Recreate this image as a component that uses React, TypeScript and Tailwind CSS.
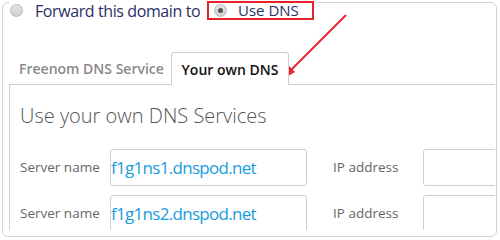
import React from "react";

function Radio({ checked }: { checked?: boolean }) {
  return (
    <span className="flex h-[13px] w-[13px] shrink-0 items-center justify-center rounded-full border border-[#b9b9b9] bg-gradient-to-b from-[#e4e4e4] to-[#cfcfcf]">
      {checked && <span className="h-[5px] w-[5px] rounded-full bg-[#555]" />}
    </span>
  );
}

function Row({ value }: { value: string }) {
  return (
    <div className="flex items-center whitespace-nowrap">
      <span className="w-[90px] shrink-0 text-[13.5px] text-[#666]">Server name</span>
      <div className="flex h-[37px] w-[197px] shrink-0 items-center rounded-[3px] border border-[#cfcfcf] text-[17px] tracking-[-0.7px] text-[#1a9be0]">
        {value}
      </div>
      <span className="ml-[26px] w-[90px] shrink-0 text-[13.5px] text-[#666]">IP address</span>
      <div className="h-[37px] w-[120px] shrink-0 rounded-[3px] border border-[#cfcfcf]" />
    </div>
  );
}

export default function App() {
  return (
    <div
      className="relative h-[240px] w-[500px] overflow-hidden bg-white"
      style={{ fontFamily: '"Open Sans", "Noto Sans", sans-serif' }}
    >
      <div className="ml-[2px] mt-[2px] h-[235px] w-[495px] rounded-[6px] border border-[#d3d1e2]">
        <div className="relative -mt-[3px] ml-[6px] flex h-[21px] w-[305px] items-center whitespace-nowrap bg-white">
          <span className="ml-[1px]"><Radio /></span>
          <span className="ml-[12px] text-[16px] tracking-[-0.4px] leading-none text-[#2b2f66]">Forward this domain to</span>
          <div className="ml-auto flex h-[19px] w-[107px] items-center border-2 border-[#e3242b] pl-[5px]">
            <Radio checked />
            <span className="ml-[11px] text-[15px] leading-none text-[#2b2f66]">Use DNS</span>
          </div>
        </div>
        <div className="ml-[6px] mt-[31px] flex h-[32px] items-end whitespace-nowrap">
          <div className="flex h-[32px] w-[162px] items-center pl-[10px] text-[14px] font-semibold text-[#8a8a8a]">
            Freenom DNS Service
          </div>
          <div className="relative z-10 -mb-px flex h-[33px] w-[118px] items-center justify-center rounded-t-[3px] border border-b-0 border-[#cfcfcf] bg-white text-[14px] font-semibold text-[#111]">
            Your own DNS
          </div>
        </div>
        <div className="ml-[6px] h-[146px] w-[486px] overflow-hidden border-l border-t border-[#cfcfcf] pl-[10px] pt-[17px]">
          <div className="whitespace-nowrap text-[20px] font-light leading-[28px] text-[#555]">Use your own DNS Services</div>
          <div className="mt-[19px] flex flex-col gap-[9px]">
            <Row value="f1g1ns1.dnspod.net" />
            <Row value="f1g1ns2.dnspod.net" />
          </div>
        </div>
      </div>
      <svg className="pointer-events-none absolute left-0 top-0" width="500" height="240">
        <line x1="346" y1="15" x2="288" y2="73" stroke="#e8262b" strokeWidth="2" />
        <polygon points="280,81 295,72 288,65" fill="#e8262b" />
      </svg>
    </div>
  );
}
